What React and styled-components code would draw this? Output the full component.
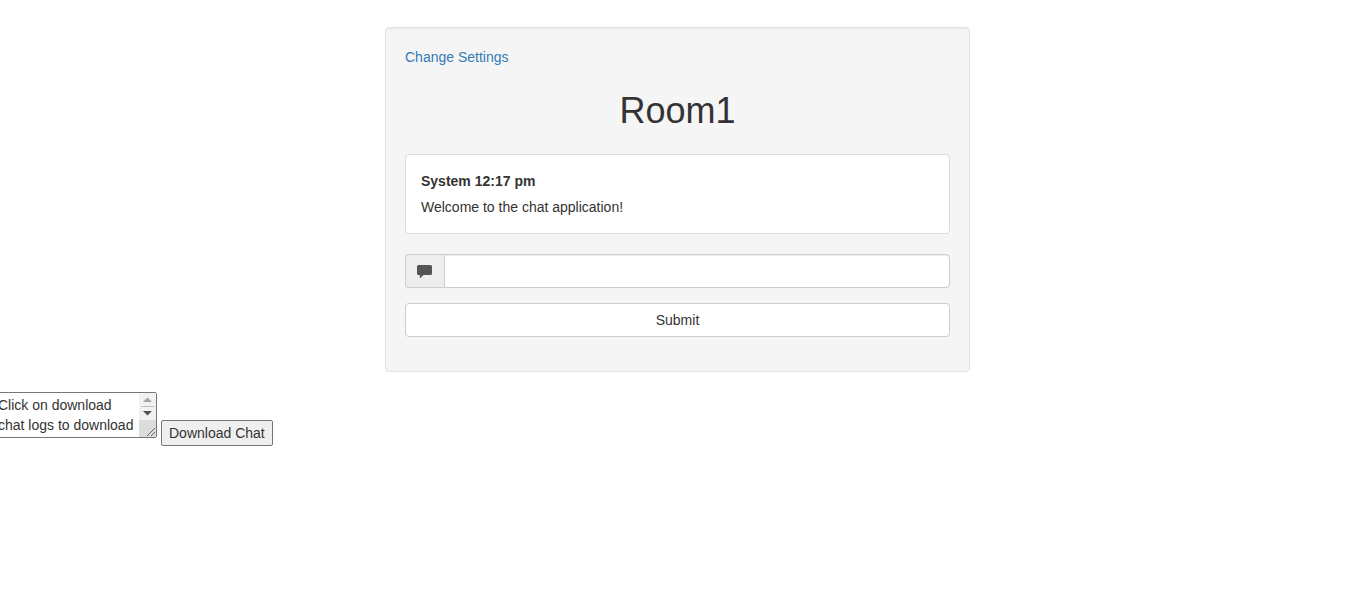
import React, { useRef } from "react";
import styled, { createGlobalStyle } from "styled-components";

const GlobalStyle = createGlobalStyle`
  *, *::before, *::after { box-sizing: border-box; }
  body {
    margin: 0;
    background: #fff;
    color: #333;
    font: 14px/20px "Liberation Sans", Arial, sans-serif;
    overflow-x: hidden;
  }
`;

const Main = styled.main`
  display: flex;
  justify-content: center;
  padding: 27px 5px 20px 0;
`;

const Well = styled.section`
  width: 100%;
  max-width: 585px;
  padding: 19px 19px 34px;
  background: #f5f5f5;
  border: 1px solid #e3e3e3;
  border-radius: 4px;
  box-shadow: inset 0 1px 1px rgba(0, 0, 0, 0.05);
`;

const SettingsLink = styled.a`
  color: #337ab7;
  text-decoration: none;
  &:hover { text-decoration: underline; }
`;

const RoomTitle = styled.h1`
  margin: 24px 0;
  font-size: 36px;
  font-weight: 500;
  line-height: 39px;
  text-align: center;
`;

const Message = styled.article`
  display: flex;
  flex-direction: column;
  gap: 6px;
  padding: 16px 15px;
  margin-bottom: 20px;
  background: #fff;
  border: 1px solid #ddd;
  border-radius: 4px;
`;

const MessageText = styled.p`
  margin: 0;
`;

const MessageForm = styled.form`
  display: flex;
  flex-direction: column;
  gap: 15px;
`;

const InputGroup = styled.div`
  display: flex;
  height: 34px;
`;

const Addon = styled.label`
  display: flex;
  align-items: center;
  justify-content: center;
  width: 39px;
  background: #eee;
  border: 1px solid #ccc;
  border-right: 0;
  border-radius: 4px 0 0 4px;
`;

const TextInput = styled.input`
  flex: 1;
  min-width: 0;
  padding: 6px 12px;
  font: inherit;
  color: #555;
  background: #fff;
  border: 1px solid #ccc;
  border-radius: 0 4px 4px 0;
  box-shadow: inset 0 1px 1px rgba(0, 0, 0, 0.075);
`;

const SubmitButton = styled.button`
  height: 34px;
  padding: 6px 12px;
  font: inherit;
  color: #333;
  background: #fff;
  border: 1px solid #ccc;
  border-radius: 4px;
`;

const LogForm = styled.form`
  display: flex;
  align-items: flex-end;
  gap: 4px;
  margin-left: -5px;
`;

const LogBox = styled.div`
  position: relative;
  display: flex;
  margin-bottom: 8px;
`;

const LogText = styled.textarea`
  width: 162px;
  height: 46px;
  margin: 0;
  padding: 2px 19px 2px 2px;
  font: inherit;
  color: inherit;
  background: #fff;
  border: 1px solid #767676;
  border-radius: 2px;
  resize: none;
  scrollbar-width: none;
`;

const ScrollArt = styled.svg`
  position: absolute;
  top: 1px;
  right: 1px;
`;

const DownloadButton = styled.button`
  height: 26px;
  margin: 0;
  padding: 2px 7px;
  font: inherit;
  color: inherit;
  background: #efefef;
  border: 1px solid #767676;
  border-radius: 2px;
`;

const CommentIcon = () => (
  <svg width="16" height="14" viewBox="0 0 16 14" aria-hidden="true">
    <path
      d="M1.5 1H13.5Q15 1 15 2.5V9.5Q15 11 13.5 11H6.5L3.4 14H2.8V11H1.5Q0 11 0 9.5V2.5Q0 1 1.5 1Z"
      fill="#555"
    />
  </svg>
);

const LogScrollbar = ({ onScroll }) => (
  <ScrollArt width="17" height="44" viewBox="0 0 17 44" aria-hidden="true">
    <g onClick={() => onScroll(-20)}>
      <rect width="17" height="14" fill="#f1f1f1" />
      <path d="M4 9L8.5 4.5L13 9Z" fill="#a3a3a3" />
    </g>
    <g onClick={() => onScroll(20)}>
      <rect y="14" width="17" height="13" fill="#f1f1f1" />
      <path d="M4 18L8.5 22.5L13 18Z" fill="#505050" />
    </g>
    <rect x="2" y="13" width="13" height="1" fill="#c1c1c1" />
    <rect y="27" width="17" height="17" fill="#dcdcdc" />
    <path d="M8 43L16 35M12 43L16 39" stroke="#666" strokeWidth="1" />
  </ScrollArt>
);

export default function App() {
  const log = useRef(null);
  const stop = (event) => event.preventDefault();
  return (
    <>
      <GlobalStyle />
      <Main>
        <Well>
          <SettingsLink href="#settings">Change Settings</SettingsLink>
          <RoomTitle>Room1</RoomTitle>
          <Message>
            <strong>System 12:17 pm</strong>
            <MessageText>Welcome to the chat application!</MessageText>
          </Message>
          <MessageForm onSubmit={stop}>
            <InputGroup>
              <Addon htmlFor="message" aria-label="Message">
                <CommentIcon />
              </Addon>
              <TextInput id="message" type="text" autoComplete="off" />
            </InputGroup>
            <SubmitButton type="submit">Submit</SubmitButton>
          </MessageForm>
        </Well>
      </Main>
      <LogForm onSubmit={stop}>
        <LogBox>
          <LogText
            ref={log}
            aria-label="Chat log"
            defaultValue="Click on download chat logs to download"
          />
          <LogScrollbar onScroll={(top) => log.current.scrollBy({ top })} />
        </LogBox>
        <DownloadButton type="submit">Download Chat</DownloadButton>
      </LogForm>
    </>
  );
}
